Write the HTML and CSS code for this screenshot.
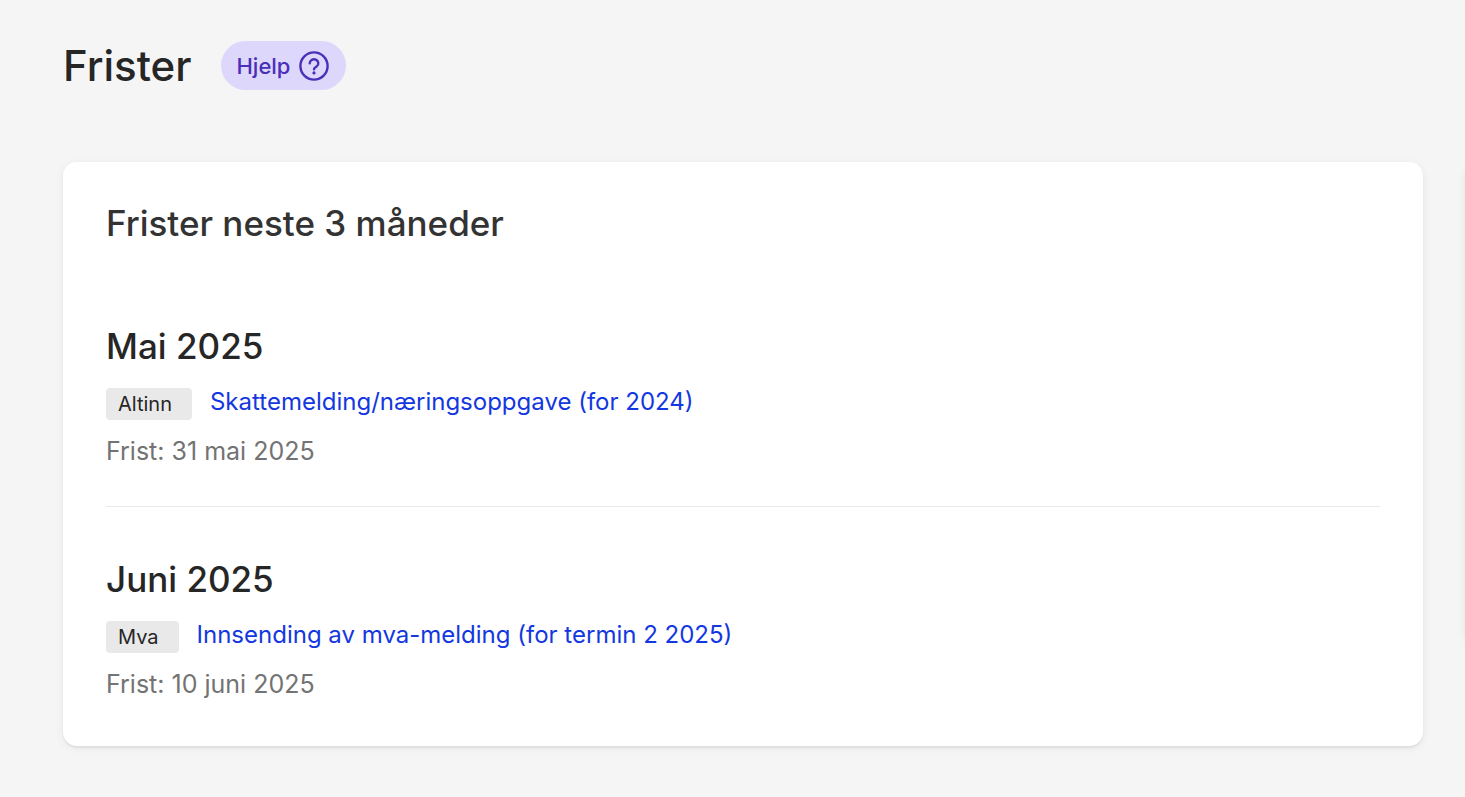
FILE: index.html
```html
<!DOCTYPE html>
<html lang="no">
<head>
    <meta charset="UTF-8">
    <meta name="viewport" content="width=device-width, initial-scale=1.0">
    <title>Frister</title>
    <link rel="stylesheet" href="styles.css">
</head>
<body>
    <header class="page-header">
        <h1>Frister</h1>
        <button type="button" class="help-button">
            Hjelp
            <svg class="help-icon" viewBox="0 0 32 32" aria-hidden="true">
                <circle cx="16" cy="16" r="13.6"/>
                <path d="M11.7 13.4a4.3 4 0 1 1 7 3c-1.5 1.2-2.7 1.4-2.7 2.9"/>
                <circle class="dot" cx="16" cy="22.9" r="1.6"/>
            </svg>
        </button>
    </header>

    <main class="columns">
        <section class="card">
            <h2 class="card-title">Frister neste 3 måneder</h2>

            <div class="month">
                <h3>Mai 2025</h3>
                <div class="deadline">
                    <span class="tag">Altinn</span>
                    <a href="#">Skattemelding/næringsoppgave (for 2024)</a>
                </div>
                <p class="due">Frist: 31 mai 2025</p>
            </div>

            <div class="month">
                <h3>Juni 2025</h3>
                <div class="deadline">
                    <span class="tag">Mva</span>
                    <a href="#">Innsending av mva-melding (for termin 2 2025)</a>
                </div>
                <p class="due">Frist: 10 juni 2025</p>
            </div>
        </section>

        <aside class="card side-card"></aside>
    </main>
</body>
</html>
```
FILE: styles.css
```css
body {
    margin: 0;
    padding: 40px 42px 51px 63px;
    overflow-x: hidden;
    background: #f5f5f5;
    color: #262626;
    font-family: Inter, "Liberation Sans", sans-serif;
}
h1, h2, h3, p {
    margin: 0;
    font-weight: 500;
}
.page-header {
    display: flex;
    align-items: center;
    gap: 30px;
    margin-bottom: 71px;
}
h1 {
    font-size: 42px;
    line-height: 51px;
}
.help-button {
    display: flex;
    align-items: center;
    gap: 8px;
    height: 49px;
    padding: 0 16px 0 15px;
    border: none;
    border-radius: 25px;
    background: #ded7fc;
    color: #4a2fb8;
    font-family: inherit;
    font-size: 22px;
    font-weight: 500;
    cursor: pointer;
}
.help-icon {
    width: 32px;
    height: 32px;
    fill: none;
    stroke: currentColor;
    stroke-width: 2.4;
    stroke-linecap: round;
}
.help-icon .dot {
    fill: currentColor;
    stroke: none;
}
/* the side card continues past the right edge of the window */
.columns {
    display: grid;
    grid-template-columns: 100% 100%;
    gap: 42px;
    align-items: start;
}
.card {
    padding: 39px 43px 44px;
    border-radius: 14px;
    background: #fff;
    box-shadow: 0 2px 2px rgba(0, 0, 0, 0.06), 0 2px 10px rgba(0, 0, 0, 0.06);
}
.side-card {
    min-height: 400px;
}
.card-title {
    margin-bottom: 79px;
    color: #333;
    font-size: 35px;
    line-height: 44px;
}
.month + .month {
    margin-top: 37px;
    padding-top: 50px;
    border-top: 1px solid #e9e9e9;
}
h3 {
    margin-bottom: 20px;
    font-size: 35px;
    line-height: 44px;
}
.deadline {
    display: flex;
    align-items: flex-start;
    gap: 18px;
    margin-bottom: 13px;
}
.tag {
    padding: 0 20px 0 12px;
    border-radius: 4px;
    background: #e9e9e9;
    font-size: 20px;
    line-height: 32px;
}
.deadline a {
    color: #1337e0;
    font-size: 24px;
    line-height: 28px;
    text-decoration: none;
}
.deadline a:hover {
    text-decoration: underline;
}
.due {
    color: #737373;
    font-size: 25px;
    font-weight: 400;
    line-height: 36px;
}
```
